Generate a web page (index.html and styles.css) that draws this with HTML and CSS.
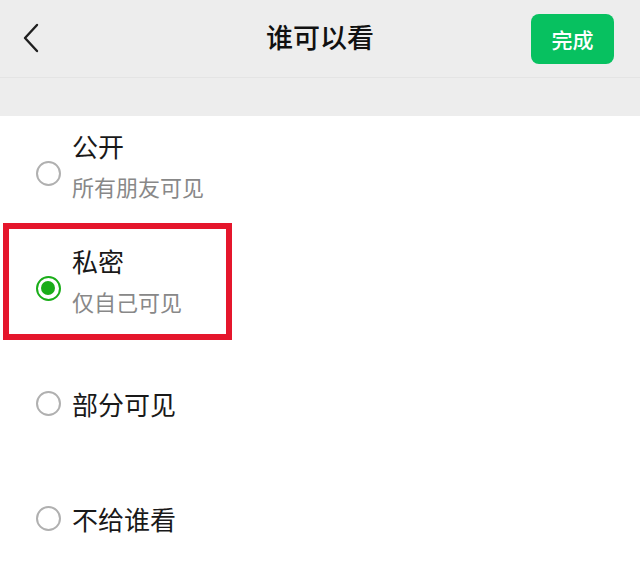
FILE: index.html
```html
<!DOCTYPE html>
<html lang="zh-CN">
<head>
<meta charset="utf-8">
<title>谁可以看</title>
<link rel="stylesheet" href="styles.css">
</head>
<body>
<div class="page">
  <header class="nav">
    <div class="nav-left">
      <svg class="back" width="18" height="30" viewBox="0 0 18 30"><path d="M15 2 L3 15 L15 28" fill="none" stroke="#1f1f1f" stroke-width="2.4" stroke-linecap="round" stroke-linejoin="round"/></svg>
    </div>
    <h1 class="nav-title">谁可以看</h1>
    <div class="nav-right"><button class="done">完成</button></div>
  </header>
  <div class="band"></div>
  <ul class="options">
    <li class="option">
      <span class="radio"></span>
      <div class="text two">
        <div class="opt-title">公开</div>
        <div class="opt-sub">所有朋友可见</div>
      </div>
    </li>
    <li class="option selected">
      <span class="radio checked"></span>
      <div class="text two">
        <div class="opt-title">私密</div>
        <div class="opt-sub">仅自己可见</div>
      </div>
      <div class="highlight"></div>
    </li>
    <li class="option">
      <span class="radio"></span>
      <div class="text">
        <div class="opt-title">部分可见</div>
      </div>
    </li>
    <li class="option">
      <span class="radio"></span>
      <div class="text">
        <div class="opt-title">不给谁看</div>
      </div>
    </li>
  </ul>
</div>
</body>
</html>
```
FILE: styles.css
```css
html, body {
  margin: 0;
  padding: 0;
  background: #ffffff;
  overflow: hidden;
}
body {
  font-family: "Noto Sans CJK SC", "Noto Sans", sans-serif;
  color: #191919;
}
.page {
  width: 640px;
  height: 566px;
  overflow: hidden;
}
.nav {
  height: 77px;
  background: #ededed;
  border-bottom: 1px solid #e4e4e4;
  display: grid;
  grid-template-columns: 1fr auto 1fr;
  align-items: center;
}
.nav-left {
  padding-left: 22px;
  display: flex;
  align-items: center;
}
.back {
  display: block;
  margin-top: -1px;
}
.nav-title {
  margin: 0;
  font-size: 27px;
  font-weight: 500;
  line-height: 36px;
  color: #111111;
  margin-top: -4px;
}
.nav-right {
  display: flex;
  justify-content: flex-end;
  padding-right: 26px;
}
.done {
  width: 83px;
  height: 50px;
  border: none;
  border-radius: 8px;
  background: #07c160;
  color: #ffffff;
  font-family: "Noto Sans CJK SC", sans-serif;
  font-size: 21px;
  font-weight: 500;
  padding: 0;
  margin-top: 1px;
}
.band {
  height: 38px;
  background: #ededed;
}
.options {
  list-style: none;
  margin: 0;
  padding: 0;
  background: #ffffff;
}
.option {
  position: relative;
  height: 115px;
  display: flex;
  align-items: center;
  padding-left: 36px;
  gap: 11px;
}
.radio {
  box-sizing: border-box;
  width: 25px;
  height: 25px;
  border-radius: 50%;
  border: 2px solid #b0b0b0;
  flex: none;
  position: relative;
}
.radio.checked {
  border: 2.5px solid #1aad19;
}
.radio.checked::after {
  content: "";
  position: absolute;
  left: 3px;
  top: 3px;
  width: 14px;
  height: 14px;
  border-radius: 50%;
  background: #1aad19;
}
.text.two {
  margin-bottom: 16px;
}
.opt-title {
  font-size: 26px;
  line-height: 40px;
  color: #191919;
}
.opt-sub {
  font-size: 22px;
  line-height: 40px;
  color: #888888;
}
.highlight {
  position: absolute;
  left: 3px;
  top: -8px;
  width: 229px;
  height: 117px;
  box-sizing: border-box;
  border: 6px solid #e5162c;
  pointer-events: none;
}
```
